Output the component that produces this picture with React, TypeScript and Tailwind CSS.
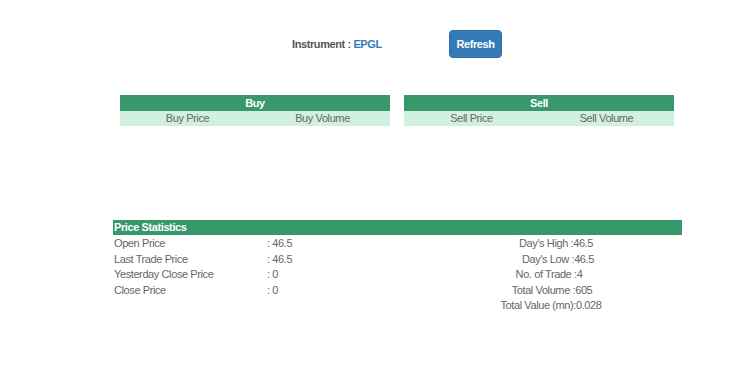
import React from "react";

const font = { fontFamily: '"Liberation Sans", Arial, sans-serif' };

export default function App() {
  const left = [
    ["Open Price", ": 46.5"],
    ["Last Trade Price", ": 46.5"],
    ["Yesterday Close Price", ": 0"],
    ["Close Price", ": 0"],
    ["", ""],
  ];
  const right: [string, string][] = [
    ["Day's High :46.5", "pl-[8px]"],
    ["Day's Low :46.5", "pl-[12px]"],
    ["No. of Trade :4", "pr-[6px]"],
    ["Total Volume :605", ""],
    ["Total Value (mn):0.028", "pr-[2px]"],
  ];
  return (
    <div className="w-[730px] h-[390px] bg-white text-[#666] overflow-hidden" style={font}>
      <div className="flex items-center pt-[30px] pl-[292px]">
        <div className="text-[11px] font-bold tracking-[-0.4px] text-[#555] w-[157px]">
          Instrument : <span className="text-[#337ab7]">EPGL</span>
        </div>
        <button className="h-[28px] w-[53px] rounded-[4px] bg-[#337ab7] border border-[#2e6da4] text-white text-[11px] font-bold tracking-[-0.4px]">
          Refresh
        </button>
      </div>

      <div className="flex gap-[14px] pl-[120px] mt-[37px]">
        {["Buy", "Sell"].map((t) => (
          <div key={t} className="w-[270px]">
            <div className="h-[16px] bg-[#37996b] text-white text-[11px] font-bold tracking-[-0.4px] text-center leading-[16px]">
              {t}
            </div>
            <div className="h-[15px] bg-[#d2f0e0] grid grid-cols-2 text-[11px] tracking-[-0.4px] leading-[15px] text-center text-[#666]">
              <div>{t} Price</div>
              <div>{t} Volume</div>
            </div>
          </div>
        ))}
      </div>

      <div className="ml-[113px] w-[569px] mt-[94px]">
        <div className="h-[15px] bg-[#37996b] text-white text-[11px] font-bold tracking-[-0.4px] leading-[15px] pl-[1px]">
          Price Statistics
        </div>
        <div className="text-[11px] tracking-[-0.4px] leading-[15.5px] text-[#666] pt-[1px]">
          {left.map((r, i) => (
            <div key={i} className="flex h-[15.5px]">
              <div className="w-[154px] pl-[1px]">{r[0]}</div>
              <div className="w-[185px]">{r[1]}</div>
              <div className={"w-[200px] text-center " + right[i][1]}>{right[i][0]}</div>
            </div>
          ))}
        </div>
      </div>
    </div>
  );
}
